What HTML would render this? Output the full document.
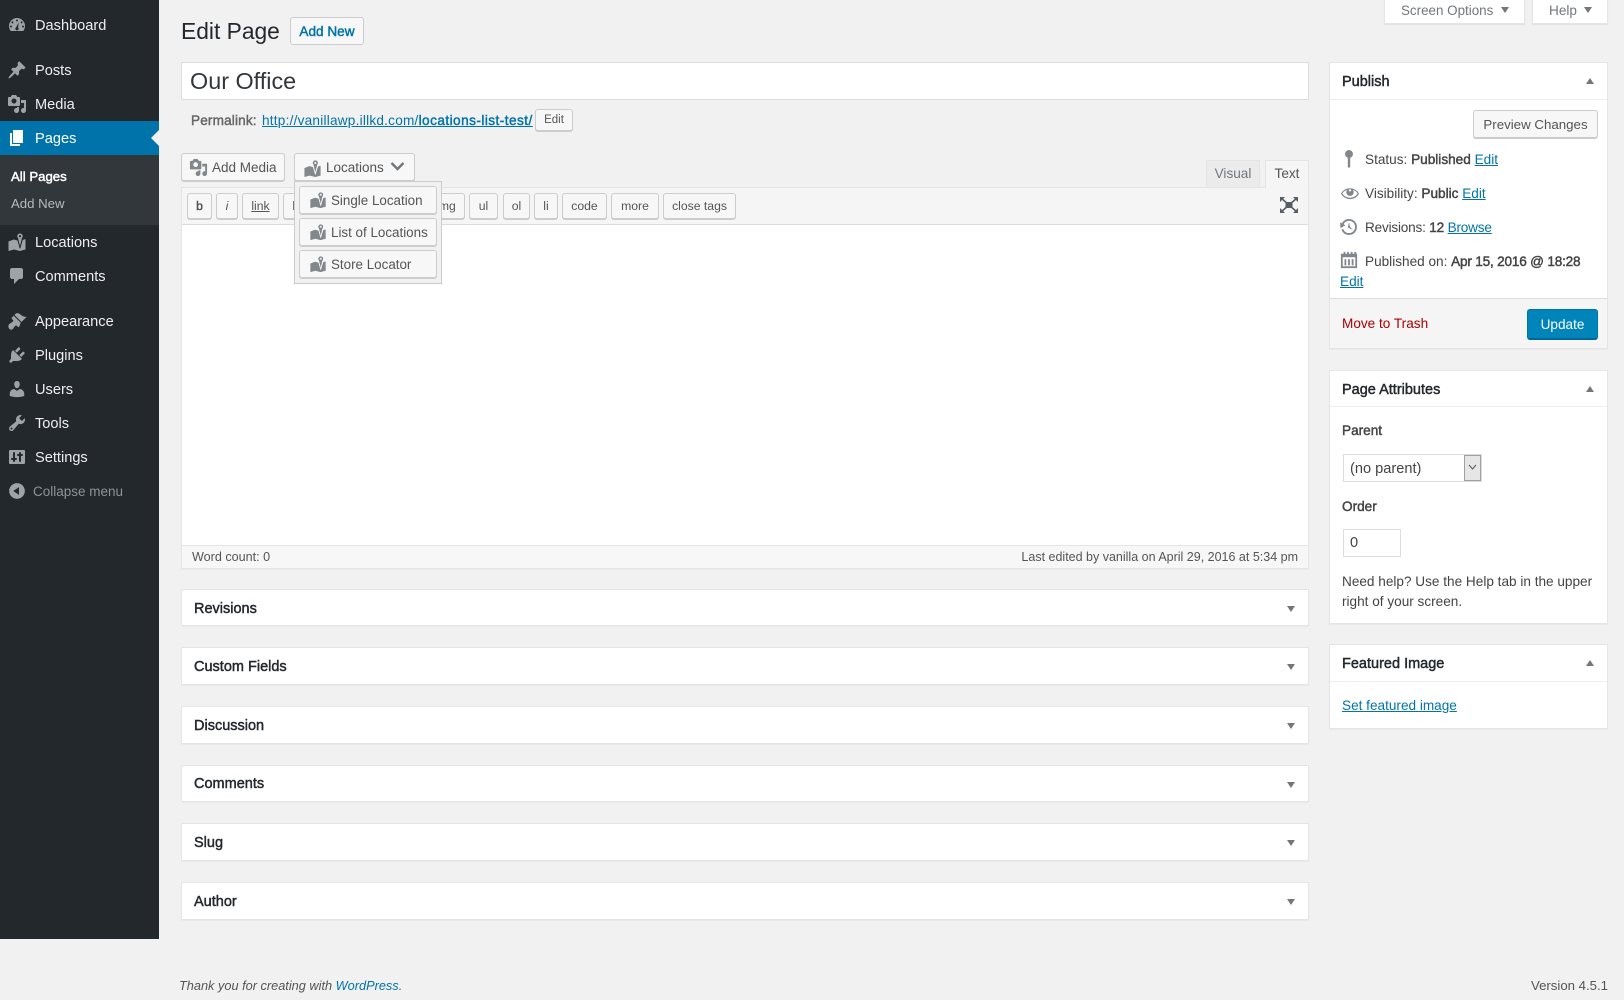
<!DOCTYPE html>
<html lang="en"><head><meta charset="utf-8"><title>Edit Page</title>
<style>
html,body{margin:0;padding:0;width:1624px;height:1000px;overflow:hidden;background:#f1f1f1}
body{position:relative;font-family:"Liberation Sans",sans-serif;font-size:13.6px;color:#444}
*{box-sizing:border-box}
.t{position:absolute;white-space:nowrap;line-height:20px}
.a{position:absolute}
.sb,b{font-weight:400;-webkit-text-stroke:.45px currentColor}
a{color:#0073aa}
#side{position:absolute;left:0;top:0;width:159px;height:939px;background:#23282d}
#side .t{color:#eee;font-size:14.6px;left:35px}
#side svg{position:absolute;left:7px;width:20px;height:20px;fill:#9ea3a8}
.btn{position:absolute;background:#f7f7f7;border:1px solid #ccc;border-radius:3px;box-shadow:0 1px 0 #ccc;color:#555;text-align:center;white-space:nowrap}
.tb{top:193px;height:26px;line-height:25px;font-size:12.2px}
.box{position:absolute;background:#fff;border:1px solid #e5e5e5;box-shadow:0 1px 1px rgba(0,0,0,.04)}
.mb{left:181px;width:1128px}
.mb span{position:absolute;left:12px;top:50%;margin-top:-9px;line-height:20px;font-size:14.5px;color:#23282d}
.mb i{position:absolute;right:13px;top:50%;margin-top:-2px;border:4px solid transparent;border-top:6px solid #72777c;border-bottom:0}
.rb{left:1329px;width:279px}
.rb h2{position:absolute;margin:0;left:0;right:0;top:0;border-bottom:1px solid #eee;font-weight:400;font-size:14.5px;line-height:20px;color:#23282d}
.rb h2 span{position:absolute;left:12px;top:9px}
.up{position:absolute;right:13px;top:15px;border:4px solid transparent;border-bottom:6px solid #72777c;border-top:0}
.ic{position:absolute;fill:#82878c}
.dd{left:299px;width:138px;height:28px;text-align:left;font-size:13.4px;line-height:27px;padding-left:31px}
.dd svg{position:absolute;left:9px;top:4px;width:18px;height:18px;fill:#82878c}
.bt{font-size:13.5px;line-height:27px}
</style></head><body>
<svg width="0" height="0" style="position:absolute">
<symbol id="map" viewBox="0 0 20 20"><path fill-rule="evenodd" d="M13 1.5a2.7 2.7 0 0 1 1.9 4.6L13 14l-1.9-7.9A2.7 2.7 0 0 1 13 1.5zm0 1.6a1.1 1.1 0 1 0 0 2.2 1.1 1.1 0 0 0 0-2.2zM1.5 9.5C3 9 5 8 7 7.5l3.5 1L12.7 16.5h.6L15.7 8l2.8-1v10.5c-2.5.5-3.5 1-5.5 1.5l-6-1.5L1.5 19z"/></symbol>
<symbol id="media" viewBox="0 0 20 20"><path fill-rule="evenodd" d="M13 11V4c0-.55-.45-1-1-1h-1.67L9 1H5L3.67 3H2c-.55 0-1 .45-1 1v7c0 .55.45 1 1 1h10c.55 0 1-.45 1-1zM7 4.5c1.38 0 2.5 1.12 2.5 2.5S8.38 9.5 7 9.5 4.5 8.38 4.5 7 5.62 4.5 7 4.5zM14 6h5v10.5c0 1.38-1.12 2.5-2.5 2.5S14 17.88 14 16.5s1.12-2.5 2.5-2.5c.17 0 .34.02.5.05V9h-3V6zm-4 8.05V13h2v3.5c0 1.38-1.12 2.5-2.5 2.5S7 17.88 7 16.5 8.12 14 9.5 14c.17 0 .34.02.5.05z"/></symbol>
</svg>

<div id="side">
<svg style="top:15px" viewBox="0 0 20 20"><path fill-rule="evenodd" d="M3.76 16h12.48A7.97 7.97 0 0 0 18 11a8 8 0 1 0-16 0c0 1.9.66 3.64 1.76 5zM10 4.5a1 1 0 1 1 0 2 1 1 0 0 1 0-2zM5.4 6.4a1 1 0 1 1 0 2 1 1 0 0 1 0-2zm9.2 0a1 1 0 1 1 0 2 1 1 0 0 1 0-2zM4 10.5a1 1 0 1 1 0 2 1 1 0 0 1 0-2zm12 0a1 1 0 1 1 0 2 1 1 0 0 1 0-2zM11.7 7.5l-.6 5.1a1.6 1.6 0 1 1-2.2 0z"/></svg>
<span class="t" style="top:16px">Dashboard</span>
<svg style="top:60px" viewBox="0 0 20 20"><path d="M10.44 3.02l1.82-1.82 6.36 6.35-1.83 1.82c-1.05-.68-2.48-.57-3.41.36l-.75.75c-.92.93-1.04 2.35-.35 3.41l-1.83 1.82-2.41-2.41-2.8 2.79c-.42.42-3.38 2.71-3.8 2.29s1.86-3.39 2.28-3.81l2.79-2.79L4.1 9.36l1.83-1.82c1.05.69 2.48.57 3.4-.36l.75-.75c.93-.92 1.05-2.35.36-3.41z"/></svg>
<span class="t" style="top:61px">Posts</span>
<svg style="top:94px"><use href="#media"/></svg>
<span class="t" style="top:95px">Media</span>
<div class="a" style="left:0;top:121px;width:159px;height:34px;background:#0073aa"></div>
<div class="a" style="left:151px;top:130px;border:8px solid transparent;border-right-color:#f1f1f1;border-left:0"></div>
<svg style="top:128px;fill:#fff" viewBox="0 0 20 20"><path d="M6 15V2h10v13H6zm-1 1h8v2H3V5h2v11z"/></svg>
<span class="t" style="top:129px;color:#fff">Pages</span>
<div class="a" style="left:0;top:155px;width:159px;height:70px;background:#32373c"></div>
<span class="t sb" style="left:11px;top:167px;font-size:13.2px;color:#fff">All Pages</span>
<span class="t" style="left:11px;top:194px;font-size:13.2px;color:#b4b9be">Add New</span>
<svg style="top:232px"><use href="#map"/></svg>
<span class="t" style="top:233px">Locations</span>
<svg style="top:266px" viewBox="0 0 20 20"><path d="M5 2h9c1.1 0 2 .9 2 2v7c0 1.1-.9 2-2 2h-2l-5 5v-5H5c-1.1 0-2-.9-2-2V4c0-1.1.9-2 2-2z"/></svg>
<span class="t" style="top:267px">Comments</span>
<svg style="top:311px" viewBox="0 0 20 20"><path d="M14.48 11.06L7.41 3.99l1.5-1.5c.5-.56 2.3-.47 3.51.32 1.21.8 1.43 1.28 2.91 2.1 1.18.64 2.45 1.26 4.45.85zm-.71.71L6.7 4.7 4.93 6.47c-.39.39-.39 1.02 0 1.41l1.06 1.06c.39.39.39 1.03 0 1.42-.6.6-1.43 1.11-2.21 1.69-.35.26-.7.53-1.01.84C1.43 13.23.91 15.24 1.82 17.06c.9 1.82 2.75 2.1 3.94.91.31-.31.58-.66.85-1.01.58-.78 1.09-1.61 1.69-2.21.39-.39 1.02-.39 1.41 0l1.06 1.06c.39.39 1.02.39 1.41 0z"/></svg>
<span class="t" style="top:312px">Appearance</span>
<svg style="top:345px" viewBox="0 0 20 20"><path d="M13.11 4.36L9.87 7.6 8 5.73l3.24-3.24c.35-.34 1.05-.2 1.56.32.52.51.66 1.21.31 1.55zm-8 1.77l.91-1.12 9.01 9.01-1.19.84c-.71.71-2.63 1.16-3.82 1.16H6.14L4.9 17.26c-.59.59-1.54.59-2.12 0-.59-.58-.59-1.53 0-2.12l1.24-1.24v-3.88c0-1.13.4-3.19 1.09-3.89zm7.26 3.97l3.24-3.24c.34-.35 1.04-.21 1.55.31.52.51.66 1.21.31 1.55l-3.24 3.25z"/></svg>
<span class="t" style="top:346px">Plugins</span>
<svg style="top:379px" viewBox="0 0 20 20"><path d="M10 9.25c-2.27 0-2.73-3.44-2.73-3.44C7 4.02 7.82 2 9.97 2c2.16 0 2.98 2.02 2.71 3.81 0 0-.41 3.44-2.68 3.44zm0 2.57L12.72 10c2.39 0 4.52 2.33 4.52 4.53v2.49s-3.65 1.13-7.24 1.13c-3.65 0-7.24-1.13-7.24-1.13v-2.49c0-2.25 1.94-4.48 4.47-4.48z"/></svg>
<span class="t" style="top:380px">Users</span>
<svg style="top:413px" viewBox="0 0 20 20"><path fill-rule="evenodd" d="M16.68 9.77c-1.34 1.34-3.3 1.67-4.95.99l-5.41 6.52c-.99.99-2.59.99-3.58 0s-.99-2.59 0-3.57l6.52-5.42c-.68-1.65-.35-3.61.99-4.95 1.28-1.28 3.12-1.62 4.72-1.06l-2.89 2.89 2.82 2.82 2.86-2.87c.53 1.58.18 3.39-1.08 4.65zM3.81 16.21c.4.39 1.04.39 1.43 0 .4-.4.4-1.04 0-1.43-.39-.4-1.03-.4-1.43 0-.39.39-.39 1.03 0 1.43z"/></svg>
<span class="t" style="top:414px">Tools</span>
<svg style="top:447px" viewBox="0 0 20 20"><path fill-rule="evenodd" d="M18 16V4c0-.55-.45-1-1-1H3c-.55 0-1 .45-1 1v12c0 .55.45 1 1 1h14c.55 0 1-.45 1-1zM8 11h1c.55 0 1 .45 1 1s-.45 1-1 1H8v1c0 .55-.45 1-1 1s-1-.45-1-1v-1H5c-.55 0-1-.45-1-1s.45-1 1-1h1V6c0-.55.45-1 1-1s1 .45 1 1v5zm7-2h-1v5c0 .55-.45 1-1 1s-1-.45-1-1V9h-1c-.55 0-1-.45-1-1s.45-1 1-1h1V6c0-.55.45-1 1-1s1 .45 1 1v1h1c.55 0 1 .45 1 1s-.45 1-1 1z"/></svg>
<span class="t" style="top:448px">Settings</span>
<svg style="top:481px" viewBox="0 0 20 20"><path fill-rule="evenodd" d="M10 2.16c4.33 0 7.84 3.51 7.84 7.84s-3.51 7.84-7.84 7.84S2.16 14.33 2.16 10 5.71 2.16 10 2.16zm2 11.72V6.12L6.18 9.97z"/></svg>
<span class="t" style="left:33px;top:482px;font-size:13.5px;color:#8e9398">Collapse menu</span>
</div>

<div class="a" style="left:1384px;top:-1px;width:141px;height:25px;background:#fff;border:1px solid #e5e5e5;box-shadow:0 1px 1px rgba(0,0,0,.08)"></div>
<span class="t" style="left:1401px;top:1px;color:#72777c;font-size:13.4px">Screen Options</span>
<div class="a" style="left:1501px;top:7px;border:4px solid transparent;border-top:6px solid #72777c;border-bottom:0"></div>
<div class="a" style="left:1532px;top:-1px;width:76px;height:25px;background:#fff;border:1px solid #e5e5e5;box-shadow:0 1px 1px rgba(0,0,0,.08)"></div>
<span class="t" style="left:1549px;top:1px;color:#72777c">Help</span>
<div class="a" style="left:1584px;top:7px;border:4px solid transparent;border-top:6px solid #72777c;border-bottom:0"></div>

<span class="t" style="left:181px;top:21px;font-size:22.8px;color:#23282d">Edit Page</span>
<div class="btn" style="left:290px;top:17px;width:74px;height:28px;line-height:28px;color:#0073aa;box-shadow:none"><span class="sb">Add New</span></div>

<div class="a" style="left:181px;top:62px;width:1128px;height:38px;background:#fff;border:1px solid #ddd"></div>
<span class="t" style="left:190px;top:71px;font-size:23.4px;color:#32373c">Our Office</span>

<span class="t sb" style="left:191px;top:111px;color:#666;letter-spacing:.15px">Permalink:</span>
<a class="t" style="left:262px;top:111px;text-decoration:underline;letter-spacing:.23px">http://vanillawp.illkd.com/<b style="letter-spacing:.46px">locations-list-test/</b></a>
<div class="btn" style="left:535px;top:109px;width:38px;height:22px;line-height:21px;font-size:11.5px">Edit</div>

<div class="btn bt" style="left:181px;top:153px;width:104px;height:28px;text-align:left;padding-left:30px"><svg class="ic" style="left:7px;top:4px;width:19px;height:19px"><use href="#media"/></svg>Add Media</div>
<div class="btn bt" style="left:294px;top:153px;width:121px;height:28px;text-align:left;padding-left:31px"><svg class="ic" style="left:8px;top:5px;width:19px;height:19px"><use href="#map"/></svg>Locations<svg class="a" style="left:95px;top:7px;width:15px;height:11px" viewBox="0 0 15 11"><path d="M1.5 2l6 6 6-6" fill="none" stroke="#72777c" stroke-width="2.4"/></svg></div>

<div class="a" style="left:1206px;top:160px;width:54px;height:28px;background:#ebebeb;border:1px solid #e5e5e5;border-bottom:0;text-align:center;line-height:25px;color:#72777c">Visual</div>
<div class="a" style="left:1265px;top:160px;width:44px;height:29px;background:#f5f5f5;border:1px solid #e5e5e5;border-bottom:0;text-align:center;line-height:25px;color:#555">Text</div>

<div class="a" style="left:181px;top:187px;width:1128px;height:382px;background:#fff;border:1px solid #e5e5e5;box-shadow:0 1px 1px rgba(0,0,0,.04)"></div>
<div class="a" style="left:182px;top:188px;width:1126px;height:37px;background:#f5f5f5;border-bottom:1px solid #ddd"></div>
<div class="a" style="left:1266px;top:186px;width:42px;height:3px;background:#f5f5f5"></div>
<div class="a" style="left:182px;top:545px;width:1126px;height:23px;background:#f7f7f7;border-top:1px solid #e5e5e5"></div>
<span class="t" style="left:192px;top:547px;font-size:12.6px;color:#555">Word count: 0</span>
<span class="t" style="right:326px;top:547px;font-size:12.5px;color:#555">Last edited by vanilla on April 29, 2016 at 5:34 pm</span>

<div class="btn tb" style="left:187px;width:25px"><span class="sb">b</span></div>
<div class="btn tb" style="left:216px;width:22px"><em>i</em></div>
<div class="btn tb" style="left:242px;width:37px;text-decoration:underline">link</div>
<div class="btn tb" style="left:283px;width:60px">b-quote</div>
<div class="btn tb" style="left:347px;width:34px">del</div>
<div class="btn tb" style="left:385px;width:34px">ins</div>
<div class="btn tb" style="left:423px;width:42px;padding-left:4px">img</div>
<div class="btn tb" style="left:469px;width:29px">ul</div>
<div class="btn tb" style="left:503px;width:27px">ol</div>
<div class="btn tb" style="left:534px;width:24px">li</div>
<div class="btn tb" style="left:562px;width:45px">code</div>
<div class="btn tb" style="left:611px;width:48px">more</div>
<div class="btn tb" style="left:663px;width:73px">close tags</div>
<svg class="a" style="left:1280px;top:197px;width:18px;height:16px" viewBox="0 0 18 16"><rect x="5.5" y="5" width="7" height="6" fill="#555d66"/><path d="M1 1l16 14M17 1L1 15" stroke="#555d66" stroke-width="1.6" fill="none"/><path d="M0 0h5L0 5zM18 0h-5l5 5zM0 16h5l-5-5zM18 16h-5l5-5z" fill="#555d66"/></svg>

<div class="a" style="left:294px;top:181px;width:148px;height:103px;background:#f1f1f1;border:1px solid #ccc"></div>
<div class="btn dd" style="top:186px"><svg><use href="#map"/></svg>Single Location</div>
<div class="btn dd" style="top:218px"><svg><use href="#map"/></svg>List of Locations</div>
<div class="btn dd" style="top:250px"><svg><use href="#map"/></svg>Store Locator</div>

<div class="box mb" style="top:589px;height:37px"><span class="sb">Revisions</span><i></i></div>
<div class="box mb" style="top:647px;height:38px"><span class="sb">Custom Fields</span><i></i></div>
<div class="box mb" style="top:706px;height:38px"><span class="sb">Discussion</span><i></i></div>
<div class="box mb" style="top:765px;height:37px"><span class="sb" style="margin-top:-10px">Comments</span><i></i></div>
<div class="box mb" style="top:823px;height:38px"><span class="sb">Slug</span><i></i></div>
<div class="box mb" style="top:882px;height:38px"><span class="sb">Author</span><i></i></div>

<div class="box rb" style="top:62px;height:287px">
<h2 style="height:37px"><span class="sb">Publish</span></h2><i class="up"></i>
<div class="a" style="left:0;right:0;top:235px;bottom:0;background:#f5f5f5;border-top:1px solid #ddd"></div>
</div>
<div class="btn" style="left:1473px;top:110px;width:125px;height:28px;line-height:27px;font-size:13.3px">Preview Changes</div>
<svg class="ic" style="left:1339px;top:149px;width:20px;height:20px" viewBox="0 0 20 20"><path fill-rule="evenodd" d="M10 1a4 4 0 0 1 1.2 7.8V18l-1.2 1-1.2-1V8.8A4 4 0 0 1 10 1z"/></svg>
<span class="t" style="left:1365px;top:150px">Status: <b>Published</b> <a href="#">Edit</a></span>
<svg class="ic" style="left:1340px;top:183px;width:20px;height:20px" viewBox="0 0 20 20"><path fill-rule="evenodd" d="M18.3 9.5C15 4.9 8.5 3.8 3.9 7.2c-1.2.9-2.2 2.1-3 3.4.2.4.5.8.8 1.2 3.3 4.6 9.6 5.6 14.2 2.4.9-.7 1.7-1.4 2.4-2.4.3-.4.5-.8.8-1.2-.3-.4-.5-.8-.8-1.1zM10 6.1c.6 0 1.2.5 1.2 1.2 0 .6-.5 1.2-1.2 1.2S8.8 7.9 8.8 7.3c0-.7.5-1.2 1.2-1.2zm0 8.6c-3.1 0-6-1.6-7.7-4.2C3.5 8.8 5.1 7.6 7 6.9c-.4.7-.7 1.5-.7 2.3 0 2 1.7 3.7 3.7 3.7s3.7-1.7 3.7-3.7c0-.8-.3-1.6-.7-2.3 1.9.7 3.5 1.9 4.7 3.6-1.7 2.6-4.6 4.2-7.7 4.2z"/></svg>
<span class="t" style="left:1365px;top:184px">Visibility: <b>Public</b> <a href="#">Edit</a></span>
<svg class="ic" style="left:1339px;top:217px;width:20px;height:20px" viewBox="0 0 20 20"><path d="M13.65 2.88c3.93 2.01 5.48 6.84 3.47 10.77s-6.83 5.48-10.77 3.47c-1.87-.96-3.2-2.56-3.86-4.4l1.64-1.03c.45 1.57 1.52 2.95 3.08 3.76 3.01 1.54 6.69.35 8.23-2.66 1.55-3.01.36-6.69-2.65-8.24C9.78 3.01 6.1 4.2 4.56 7.21l1.88.97-4.95 3.08-.39-5.82 1.78.91C4.9 2.4 9.75.89 13.65 2.88zm-4.36 7.83C9.11 10.53 9 10.28 9 10c0-.07.03-.12.04-.19h-.01L10 5l.97 4.81L14 13l-4.5-2.12.02-.02c-.08-.04-.16-.09-.23-.15z"/></svg>
<span class="t" style="left:1365px;top:218px;letter-spacing:-.2px">Revisions: <b>12</b> <a href="#">Browse</a></span>
<svg class="ic" style="left:1340px;top:251px;width:18px;height:18px" viewBox="0 0 20 20"><path fill-rule="evenodd" d="M1 3h3V1h2v2h2V1h2v2h2V1h2v2h2V1h2v2h1v16H1zM3 7v10h14V7zM5 9h2v7H5zm4 0h2v7H9zm4 0h2v7h-2z"/></svg>
<span class="t" style="left:1365px;top:252px">Published on: <b style="letter-spacing:-.2px">Apr 15, 2016 @ 18:28</b></span>
<a class="t" href="#" style="left:1340px;top:272px">Edit</a>
<span class="t" style="left:1342px;top:314px;color:#a00">Move to Trash</span>
<div class="a" style="left:1527px;top:309px;width:71px;height:31px;background:#0085ba;border:1px solid #0073aa;border-bottom:2px solid #006799;border-radius:3px;color:#fff;text-align:center;line-height:30px">Update</div>

<div class="box rb" style="top:370px;height:254px">
<h2 style="height:36px"><span class="sb">Page Attributes</span></h2><i class="up"></i>
</div>
<span class="t sb" style="left:1342px;top:421px">Parent</span>
<div class="a" style="left:1343px;top:454px;width:139px;height:28px;background:#fff;border:1px solid #ddd"></div>
<div class="a" style="left:1464px;top:455px;width:17px;height:26px;background:#e6e6e6;border:1px solid #a0a0a0"></div>
<svg class="a" style="left:1468px;top:464px;width:9px;height:7px" viewBox="0 0 9 7"><path d="M1 1l3.5 4L8 1" fill="none" stroke="#555" stroke-width="1"/></svg>
<span class="t" style="left:1350px;top:459px;font-size:14.6px">(no parent)</span>
<span class="t sb" style="left:1342px;top:497px">Order</span>
<div class="a" style="left:1343px;top:529px;width:58px;height:28px;background:#fff;border:1px solid #ddd"></div>
<span class="t" style="left:1350px;top:533px;font-size:14.6px">0</span>
<span class="t" style="left:1342px;top:572px">Need help? Use the Help tab in the upper</span>
<span class="t" style="left:1342px;top:592px">right of your screen.</span>

<div class="box rb" style="top:644px;height:85px">
<h2 style="height:37px"><span class="sb">Featured Image</span></h2><i class="up"></i>
</div>
<a class="t" href="#" style="left:1342px;top:696px">Set featured image</a>

<span class="t" style="left:179px;top:976px;font-size:12.75px;font-style:italic;color:#555">Thank you for creating with <a href="#" style="text-decoration:none">WordPress</a>.</span>
<span class="t" style="right:16px;top:976px;font-size:13.2px;color:#555">Version 4.5.1</span>
</body></html>
